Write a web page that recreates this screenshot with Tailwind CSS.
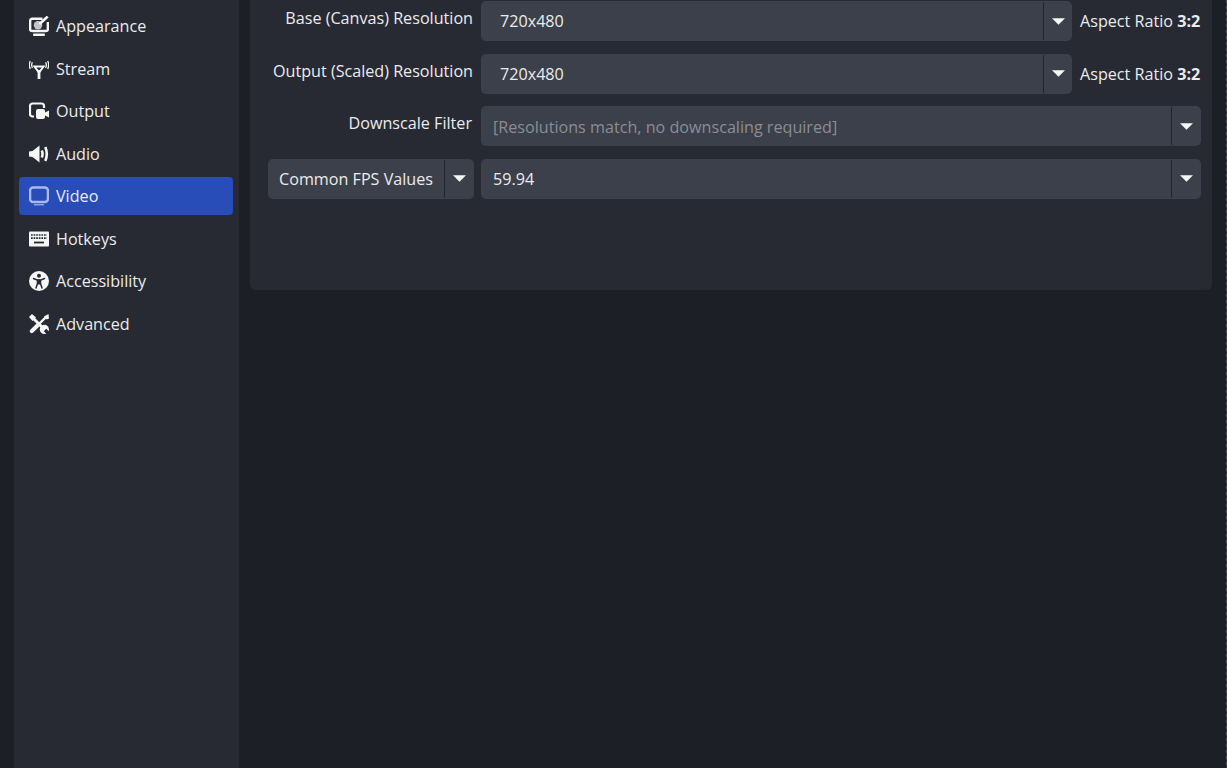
<!DOCTYPE html>
<html lang="en">
<head>
<meta charset="UTF-8">
<title>Settings - Video</title>
<script src="https://cdn.jsdelivr.net/npm/@tailwindcss/browser@4"></script>
</head>
<body class="bg-[#1c1f26] h-[768px] w-[1227px] overflow-hidden font-['Open_Sans',sans-serif] text-[16.15px] leading-[22px] text-[#ebebed]">
<div class="flex h-full">
  <!-- sidebar -->
  <nav class="ml-[14px] w-[225px] h-full bg-[#272a33] pl-[5px] pr-[6px] pt-[7px] flex flex-col gap-[4.5px]">
    <a class="h-[38px] flex items-center gap-[7px] pl-[10px]">
      <svg class="w-[20px] h-[20px]" viewBox="0 0 20 20" fill="none">
        <path d="M13.500 2.800H3.200a2.100 2.100 0 0 0-2.100 2.100v8a2.100 2.100 0 0 0 2.100 2.100h13.600a2.100 2.100 0 0 0 2.100-2.100V6" stroke="#f6f6f6" stroke-width="2.500"/>
        <rect x="4" y="17.500" width="12" height="2.500" rx="1" fill="#f6f6f6"/>
        <circle cx="9" cy="9.200" r="4.200" fill="#c4c5c8"/>
        <path d="M10.500 8 18.700 .6" stroke="#f6f6f6" stroke-width="2.700"/>
      </svg>
      <span>Appearance</span>
    </a>
    <a class="h-[38px] flex items-center gap-[7px] pl-[10px]">
      <svg class="w-[20px] h-[20px]" viewBox="0 0 20 20" fill="none" stroke="#f6f6f6">
        <path d="M10 11v9" stroke-width="2.800"/>
        <path d="M5.500 7.500h9L10 13.500z" stroke-width="2"/>
        <path d="M3.400 3.200Q1.900 6 3.400 9M1.300 2Q-.6 6 1.300 10M16.600 3.200Q18.100 6 16.600 9M18.700 2Q20.600 6 18.700 10" stroke-width="1.300"/>
      </svg>
      <span>Stream</span>
    </a>
    <a class="h-[38px] flex items-center gap-[7px] pl-[10px]">
      <svg class="w-[20px] h-[20px]" viewBox="0 0 20 20" fill="none">
        <path d="M5 15.500H3.500A2.500 2.500 0 0 1 1 13V5a2.500 2.500 0 0 1 2.500-2.500h9A2.500 2.500 0 0 1 15 5v2" stroke="#f6f6f6" stroke-width="2.200"/>
        <rect x="7" y="8" width="9" height="10" rx="2" fill="#f6f6f6"/>
        <path d="M16 11.500l4-2v7l-4-2z" fill="#f6f6f6"/>
      </svg>
      <span>Output</span>
    </a>
    <a class="h-[38px] flex items-center gap-[7px] pl-[10px]">
      <svg class="w-[20px] h-[20px]" viewBox="0 0 20 20" fill="none">
        <path d="M0 7.500l3.500-.5L10.500 1.500v17L3.500 13 0 12.500z" fill="#f6f6f6"/>
        <path d="M12.800 6.500q1.500 3.500 0 7M16.300 3q3 7 0 14" stroke="#f6f6f6" stroke-width="2.600"/>
      </svg>
      <span>Audio</span>
    </a>
    <a class="h-[38px] flex items-center gap-[7px] pl-[10px] bg-[#284cb8] rounded-[4px]">
      <svg class="w-[20px] h-[20px]" viewBox="0 0 20 20" fill="none">
        <rect x="1.100" y="1.500" width="17.800" height="14.500" rx="3" stroke="#a9b9e9" stroke-width="2.400"/>
        <path d="M5 18.800h10" stroke="#a9b9e9" stroke-width="1.200"/>
      </svg>
      <span>Video</span>
    </a>
    <a class="h-[38px] flex items-center gap-[7px] pl-[10px]">
      <svg class="w-[20px] h-[20px]" viewBox="0 0 20 20" fill="none">
        <rect x="0" y="2.500" width="20" height="15" rx="1" fill="#f6f6f6"/>
        <path d="M2 6h16M2 9.200h16" stroke="#272a33" stroke-width="1.700" stroke-dasharray="1.700 .9"/>
        <path d="M5 13.500h10" stroke="#272a33" stroke-width="1.800"/>
      </svg>
      <span>Hotkeys</span>
    </a>
    <a class="h-[38px] flex items-center gap-[7px] pl-[10px]">
      <svg class="w-[20px] h-[20px]" viewBox="0 0 20 20" fill="none">
        <circle cx="10" cy="10" r="10" fill="#f6f6f6"/>
        <circle cx="10" cy="4.800" r="2" fill="#272a33"/>
        <path d="M4.500 7.500 8 9h4l3.500-1.500M8.500 9v3.500L7 17M11.500 9v3.500L13 17" stroke="#272a33" stroke-width="1.500" stroke-linecap="round"/>
        <rect x="8.300" y="8.500" width="3.400" height="5" fill="#272a33"/>
      </svg>
      <span>Accessibility</span>
    </a>
    <a class="h-[38px] flex items-center gap-[7px] pl-[10px]">
      <svg class="w-[20px] h-[20px]" viewBox="0 0 20 20" fill="none">
        <path d="M3.500 3.500 14 14" stroke="#f6f6f6" stroke-width="3"/>
        <path d="M0 3 3 0 7 3.500 3.500 7z" fill="#f6f6f6"/>
        <circle cx="15.400" cy="15.400" r="4.600" fill="#f6f6f6"/>
        <path d="M16 16 20.500 20.500" stroke="#272a33" stroke-width="3.400"/>
        <path d="M2.800 17.200 9.500 10.500" stroke="#f6f6f6" stroke-width="4" stroke-linecap="round"/>
        <path d="M10 10 17 3" stroke="#f6f6f6" stroke-width="2.400"/>
        <path d="M15 2.500 19.500 0 20 4.500 17.500 5.500z" fill="#f6f6f6"/>
      </svg>
      <span>Advanced</span>
    </a>
  </nav>

  <!-- main panel -->
  <main class="ml-[11px] w-[962px] h-[290px] bg-[#272a33] rounded-b-[6px] pl-[18px] pr-[11px] flex flex-col gap-[12.5px]">
    <div class="flex items-center gap-[7px] h-[40px] mt-[1px]">
      <label class="w-[206px] text-right pr-[1px] -mt-[6px] whitespace-nowrap">Base (Canvas) Resolution</label>
      <div class="w-[591px] h-[40px] flex bg-[#3c404b] rounded-[5px]">
        <span class="flex-1 pl-[19px] self-center -mt-[1px]">720x480</span>
        <span class="w-[29px] border-l border-[#22252d] my-[1px] flex items-center justify-center">
          <svg class="w-[13px] h-[7px]" viewBox="0 0 14 7"><path d="M0 0h14L7 7z" fill="#f6f6f6"/></svg>
        </span>
      </div>
      <span class="ml-[1px] whitespace-nowrap">Aspect Ratio <b>3:2</b></span>
    </div>
    <div class="flex items-center gap-[7px] h-[40px]">
      <label class="w-[206px] text-right pr-[1px] -mt-[5px] whitespace-nowrap">Output (Scaled) Resolution</label>
      <div class="w-[591px] h-[40px] flex bg-[#3c404b] rounded-[5px]">
        <span class="flex-1 pl-[19px] self-center">720x480</span>
        <span class="w-[29px] border-l border-[#22252d] my-[1px] flex items-center justify-center">
          <svg class="w-[13px] h-[7px]" viewBox="0 0 14 7"><path d="M0 0h14L7 7z" fill="#f6f6f6"/></svg>
        </span>
      </div>
      <span class="ml-[1px] whitespace-nowrap">Aspect Ratio <b>3:2</b></span>
    </div>
    <div class="flex items-center gap-[7px] h-[40px]">
      <label class="w-[206px] text-right pr-[2px] -mt-[7px]">Downscale Filter</label>
      <div class="w-[720px] h-[40px] flex bg-[#3c404b] rounded-[5px]">
        <span class="flex-1 pl-[12px] self-center mt-[2px] text-[#8b8d93]">[Resolutions match, no downscaling required]</span>
        <span class="w-[30px] border-l border-[#22252d] my-[1px] flex items-center justify-center">
          <svg class="w-[13px] h-[7px]" viewBox="0 0 14 7"><path d="M0 0h14L7 7z" fill="#f6f6f6"/></svg>
        </span>
      </div>
    </div>
    <div class="flex items-center gap-[7px] h-[40px]">
      <div class="w-[206px] h-[40px] flex bg-[#3c404b] rounded-[5px]">
        <span class="flex-1 pl-[11px] self-center whitespace-nowrap">Common FPS Values</span>
        <span class="w-[30px] border-l border-[#22252d] my-[1px] flex items-center justify-center">
          <svg class="w-[13px] h-[7px]" viewBox="0 0 14 7"><path d="M0 0h14L7 7z" fill="#f6f6f6"/></svg>
        </span>
      </div>
      <div class="w-[720px] h-[40px] flex bg-[#3c404b] rounded-[5px]">
        <span class="flex-1 pl-[12px] self-center">59.94</span>
        <span class="w-[30px] border-l border-[#22252d] my-[1px] flex items-center justify-center">
          <svg class="w-[13px] h-[7px]" viewBox="0 0 14 7"><path d="M0 0h14L7 7z" fill="#f6f6f6"/></svg>
        </span>
      </div>
    </div>
  </main>
  <div class="ml-auto w-px h-full bg-[repeating-linear-gradient(to_bottom,#55585f_0_3px,#2a2d35_3px_6px)]"></div>
</div>
</body>
</html>
